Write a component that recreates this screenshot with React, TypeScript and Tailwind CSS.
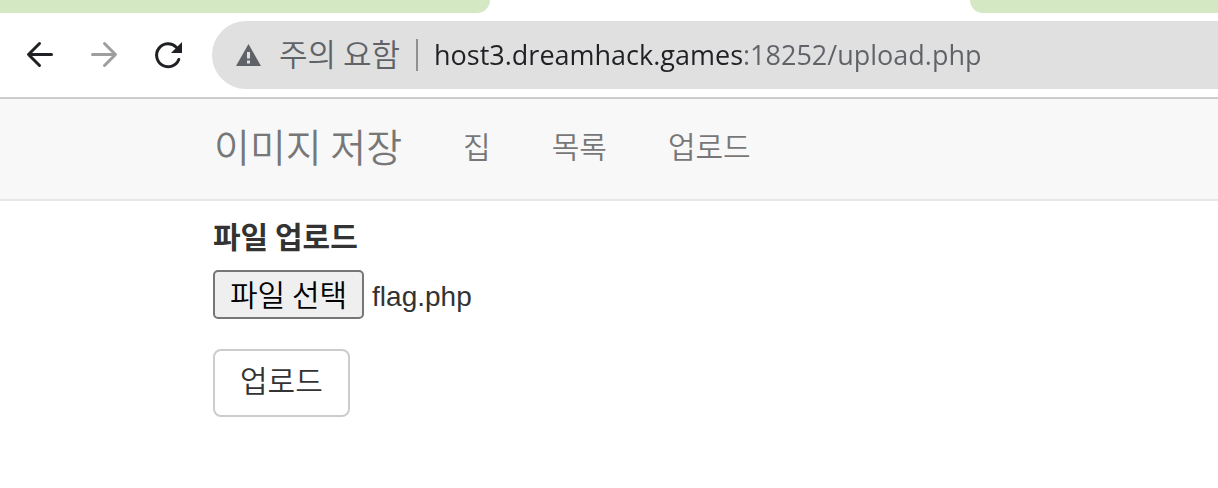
import { useRef, useState } from "react";
import type { ChangeEvent } from "react";

const navItems = [
  { label: "집", href: "/index.php" },
  { label: "목록", href: "/list.php" },
  { label: "업로드", href: "/upload.php" },
];

const TabStrip = () => {
  return (
    <div className="flex h-[13px] bg-white">
      <div className="w-[490px] rounded-br-[16px] bg-[#d5e8c4]" />
      <div className="w-[480px]" />
      <div className="grow rounded-bl-[16px] bg-[#d5e8c4]" />
    </div>
  );
};

const Toolbar = () => {
  return (
    <div className="flex items-center border-b-2 border-[#cccccc] py-2 pl-6">
      <div className="flex w-[188px] shrink-0 gap-8">
        <button type="button" aria-label="뒤로">
          <svg className="size-8" viewBox="0 0 32 32" fill="none" stroke="#202124" strokeWidth="3" strokeLinecap="round" strokeLinejoin="round">
            <path d="M27.500 15.500H4.800M15.500 4.500L4.500 15.500L15.500 26.500" />
          </svg>
        </button>
        <button type="button" aria-label="앞으로" disabled>
          <svg className="size-8" viewBox="0 0 32 32" fill="none" stroke="#9e9e9e" strokeWidth="3" strokeLinecap="round" strokeLinejoin="round">
            <path d="M4.500 15.500H27.200M16.500 4.500L27.500 15.500L16.500 26.500" />
          </svg>
        </button>
        <button type="button" aria-label="새로고침">
          <svg className="size-8" viewBox="0 0 32 32" fill="none">
            <path d="M26.800 20.500A11.500 11.500 0 1 1 24.300 8.200" stroke="#202124" strokeWidth="3" strokeLinecap="round" />
            <path d="M30 3V14H19Z" fill="#202124" />
          </svg>
        </button>
      </div>
      {/* ADDRESS BAR */}
      <div className="flex h-[68px] grow items-center rounded-l-full bg-[#e0e0e0] pl-6">
        <svg className="h-6 w-[25px] shrink-0" viewBox="0 0 25 24">
          <path fillRule="evenodd" fill="#5f6368" d="M12.500 1L25 23H0ZM11 9V15.500H14V9ZM11 17.500V20.500H14V17.500Z" />
        </svg>
        <label
          htmlFor="address"
          className="ml-[18px] shrink-0 pb-1 font-['Noto_Sans_CJK_KR',sans-serif] text-[31px] leading-8 font-[350] text-[#5f6368]"
        >
          주의 요함
        </label>
        <div className="mx-4 h-8 w-[2px] shrink-0 bg-[#8f9093]" />
        {/* host is dark, port and path are grey */}
        <input
          id="address"
          type="text"
          defaultValue="host3.dreamhack.games:18252/upload.php"
          className="min-w-0 grow bg-linear-to-r from-[#202124] from-[309px] to-[#5f6368] to-[309px] bg-clip-text font-['Open_Sans',sans-serif] text-[27px] leading-10 text-transparent caret-black outline-none"
        />
      </div>
    </div>
  );
};

const Navbar = () => {
  return (
    <nav className="flex h-[102px] items-center gap-[61px] border-b-2 border-[#e7e7e7] bg-[#f8f8f8] pb-2 pl-[214px] text-[#777777]">
      <a href="/" className="text-[39px] leading-10 font-[350]">
        이미지 저장
      </a>
      {navItems.map((item) => (
        <a key={item.href} href={item.href} className="text-[30px] leading-10 font-[350]">
          {item.label}
        </a>
      ))}
    </nav>
  );
};

const UploadForm = () => {
  const fileInput = useRef<HTMLInputElement>(null);
  const [fileName, setFileName] = useState("flag.php");

  const handleChange = (e: ChangeEvent<HTMLInputElement>) => {
    const file = e.target.files?.[0];
    if (file) setFileName(file.name);
  };

  return (
    <form className="flex flex-col items-start pt-[14px] pl-[213px]" onSubmit={(e) => e.preventDefault()}>
      <label htmlFor="file" className="text-[30px] leading-10 font-bold text-[#333333]">
        파일 업로드
      </label>
      <input ref={fileInput} id="file" type="file" tabIndex={-1} className="sr-only" onChange={handleChange} />
      <div className="mt-[15px] flex items-baseline gap-2">
        <button
          type="button"
          onClick={() => fileInput.current?.click()}
          className="h-[49px] rounded-[5px] border-2 border-[#767676] bg-[#efefef] px-[15px] pb-1 text-[30px] leading-10 font-[350] text-black"
        >
          파일 선택
        </button>
        <span className="font-['Liberation_Sans',sans-serif] text-[28px] leading-10 text-[#333333]">{fileName}</span>
      </div>
      <button
        type="submit"
        className="mt-[30px] h-[68px] rounded-[8px] border-2 border-[#cccccc] bg-white px-[25px] pb-2 text-[30px] leading-10 font-[350] text-[#333333]"
      >
        업로드
      </button>
    </form>
  );
};

const App = () => {
  return (
    <div className="min-h-screen bg-white font-['Noto_Sans_CJK_KR',sans-serif]">
      <TabStrip />
      <Toolbar />
      <Navbar />
      <UploadForm />
    </div>
  );
};

export default App;
